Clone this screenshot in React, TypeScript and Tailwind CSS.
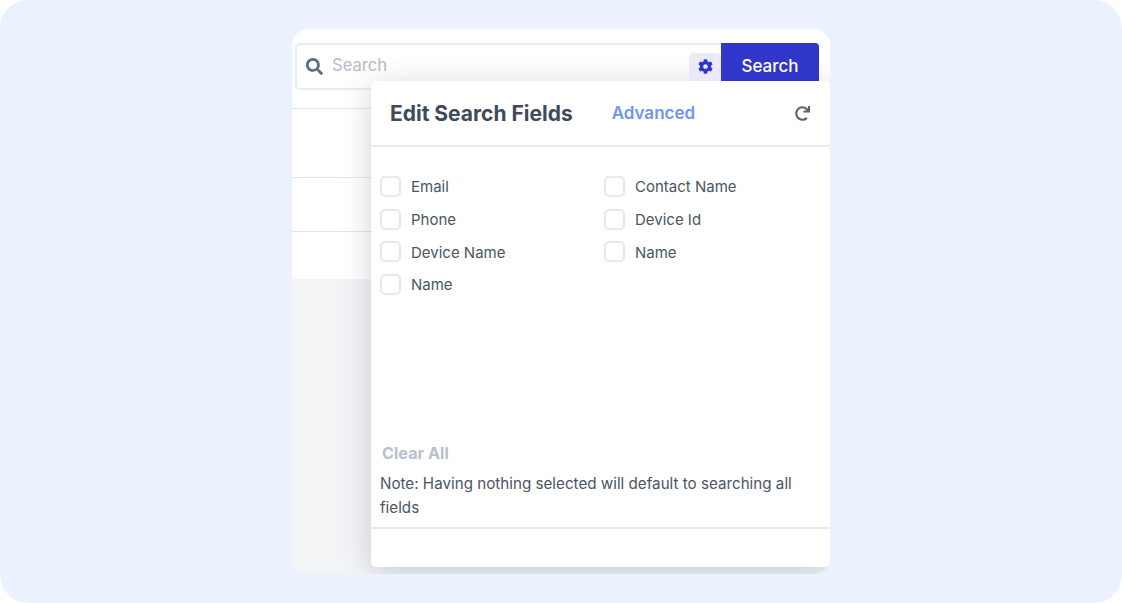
import { FaCog, FaRedo, FaSearch } from "react-icons/fa";

const leftFields = ["Email", "Phone", "Device Name", "Name"];
const rightFields = ["Contact Name", "Device Id", "Name"];

const FieldRow = ({ label }: { label: string }) => (
  <label className="flex items-center h-[21px] gap-[10px]">
    <span className="w-[21px] h-[21px] rounded-[5px] border-2 border-[#e5e8ee] bg-white" />
    <span className="text-[15px] text-[#4b5563] pt-[2px]">{label}</span>
  </label>
);

export default function App() {
  return (
    <div className="w-[1122px] h-[603px] bg-white overflow-hidden font-['Inter',sans-serif]">
      <div className="w-full h-full rounded-[28px] bg-[#ebf1fd] pt-[29px] pl-[292px]">
        <div className="relative w-[538px] h-[545px] rounded-[16px] bg-[#f3f4f6] overflow-hidden">
          <div className="bg-white pt-[14px]">
            <div className="px-[3px] pb-[18px]">
              <div className="flex items-stretch w-[524px] h-[47px] rounded-[5px] border-2 border-[#e8ebf0] bg-white">
                <div className="flex flex-1 items-center pl-[9px] gap-[9px] pb-[3px]">
                  <FaSearch size={17} className="text-[#5b6b80] mt-[2px]" />
                  <span className="text-[16.6px] text-[#b4bcc8]">Search</span>
                </div>
              </div>
            </div>
            <div className="h-[69px] border-t border-[#e1e5ea]" />
            <div className="h-[54px] border-t border-[#e1e5ea]" />
            <div className="h-[48px] border-t border-[#e1e5ea]" />
          </div>

          {/* popover */}
          <div className="absolute left-[79px] top-[52px] w-[459px] h-[486px] rounded-[5px] bg-white shadow-[0_5px_30px_rgba(60,70,85,0.24)] flex flex-col">
            <div className="flex items-center h-[66px] border-b-2 border-[#e8ebf0] pl-[19px] pr-[20px]">
              <span className="text-[21px] font-bold tracking-[0px] pt-[1px] text-[#3f4a5a]">Edit Search Fields</span>
              <span className="ml-[39px] pt-[2px] text-[17px] font-semibold text-[#6f96ee]">Advanced</span>
              <FaRedo size={15} className="ml-auto text-[#5b6470]" />
            </div>
            <div className="flex flex-1 pl-[9px] pt-[29px]">
              <div className="w-[224px] flex flex-col gap-[11.7px]">
                {leftFields.map((f) => (
                  <FieldRow key={f} label={f} />
                ))}
              </div>
              <div className="flex flex-col gap-[11.7px]">
                {rightFields.map((f) => (
                  <FieldRow key={f} label={f} />
                ))}
              </div>
            </div>
            <div className="pl-[9px] pr-[20px] pb-[7px]">
              <div className="text-[16.2px] font-bold text-[#b8c0cc] leading-[20px] pl-[2px] mb-[9px]">Clear All</div>
              <div className="text-[15.2px] text-[#4b5563] leading-[24px]">
                Note: Having nothing selected will default to searching all fields
              </div>
            </div>
            <div className="h-[40px] border-t-2 border-[#e8ebf0]" />
          </div>

          {/* search button sits over the bar, above the popover shadow */}
          <div className="absolute left-[397px] top-[14px] flex items-start">
            <div className="mt-[10px] w-[32px] h-[28px] rounded-t-[5px] bg-[#eceaf9] flex items-center justify-center pb-[2px]">
              <FaCog size={15} className="text-[#2f36c9]" />
            </div>
            <div className="w-[98px] h-[38px] rounded-tr-[4px] bg-[#2f36c9] text-white text-[17px] font-medium flex items-center justify-center pt-[10px]">
              Search
            </div>
          </div>
        </div>
      </div>
    </div>
  );
}
